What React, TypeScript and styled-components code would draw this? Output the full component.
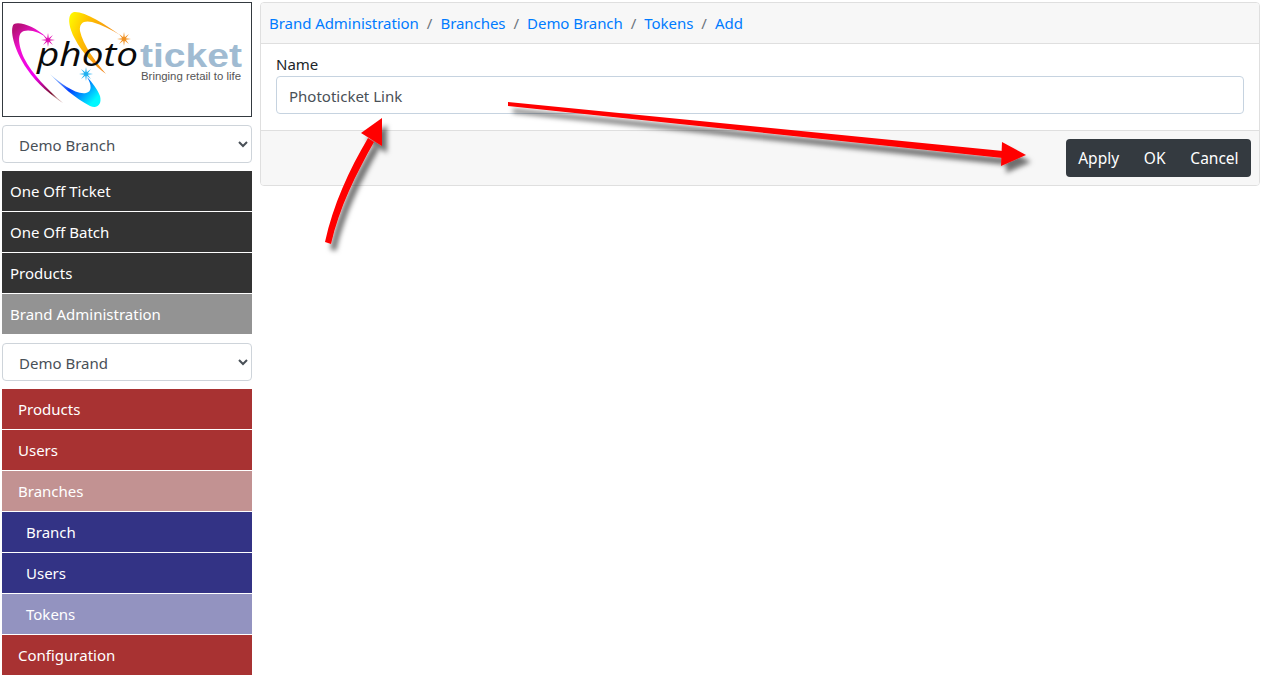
import React from "react";
import styled, { createGlobalStyle } from "styled-components";

const GlobalStyle = createGlobalStyle`
  html, body {
    margin: 0;
    padding: 0;
    background: #fff;
    font-family: "Noto Sans", "Liberation Sans", sans-serif;
    font-size: 15px;
    color: #212529;
  }
`;

const Page = styled.div`
  position: relative;
  display: flex;
  gap: 8px;
  padding: 2px;
  width: 1262px;
  height: 676px;
  box-sizing: border-box;
  overflow: hidden;
`;

const Sidebar = styled.div`
  display: flex;
  flex-direction: column;
  width: 250px;
  flex-shrink: 0;
`;

const LogoBox = styled.div`
  height: 115px;
  flex-shrink: 0;
  box-sizing: border-box;
  border: 1px solid #343a40;
  margin-bottom: 8px;
`;

const BranchSelect = styled.select<{ spaced?: boolean }>`
  display: block;
  flex-shrink: 0;
  width: 100%;
  height: 38px;
  padding: 7px 12px 5px;
  margin-top: ${(props) => (props.spaced ? 8 : 0)}px;
  margin-bottom: 8px;
  box-sizing: border-box;
  border: 1px solid #ced4da;
  border-radius: 4px;
  background-color: #fff;
  color: #495057;
  font-family: inherit;
  font-size: 15px;
`;

const MenuItem = styled.div<{ bg: string; indent: number }>`
  height: 40px;
  flex-shrink: 0;
  margin-bottom: 1px;
  padding-left: ${(props) => props.indent}px;
  display: flex;
  align-items: center;
  background: ${(props) => props.bg};
  color: #fff;
  font-size: 15px;
  box-sizing: border-box;
`;

const Card = styled.div`
  flex: 1;
  align-self: flex-start;
  border: 1px solid #dfdfdf;
  border-radius: 4px;
  overflow: hidden;
`;

const CardHeader = styled.div`
  height: 41px;
  box-sizing: border-box;
  padding: 0 8px;
  background: #f7f7f7;
  border-bottom: 1px solid #dfdfdf;
  display: flex;
  align-items: center;
`;

const Crumb = styled.a`
  color: #007bff;
  font-size: 15px;
  letter-spacing: -0.05px;
  text-decoration: none;
`;

const CrumbSep = styled.span`
  color: #6c757d;
  padding: 0 8px;
  font-size: 15px;
`;

const CardBody = styled.div`
  height: 86px;
  box-sizing: border-box;
  padding: 9px 15px 0;
`;

const Label = styled.label`
  display: block;
  font-size: 15px;
  line-height: 22px;
  margin-bottom: 1px;
`;

const TextInput = styled.input`
  display: block;
  width: 100%;
  height: 38px;
  box-sizing: border-box;
  padding: 7px 12px 5px;
  border: 1px solid #c6d3e0;
  border-radius: 4px;
  color: #495057;
  font-family: inherit;
  font-size: 15px;
  outline: none;
`;

const CardFooter = styled.div`
  height: 55px;
  box-sizing: border-box;
  padding: 8px;
  background: #f7f7f7;
  border-top: 1px solid #dfdfdf;
  display: flex;
  justify-content: flex-end;
`;

const ButtonGroup = styled.div`
  display: flex;
  height: 38px;
  background: #343a40;
  border-radius: 4px;
  overflow: hidden;
`;

const GroupButton = styled.button`
  border: 0;
  background: transparent;
  color: #fff;
  font-family: inherit;
  font-size: 15.5px;
  padding: 0 12.4px;
`;

const ArrowLayer = styled.svg`
  position: absolute;
  left: 0;
  top: 0;
  pointer-events: none;
`;

const LogoSvg = styled.svg`
  display: block;
`;

const Star = ({ x, y, color }: { x: number; y: number; color: string }) => {
  const pts: string[] = [];
  for (let i = 0; i < 16; i++) {
    const r = i % 2 === 0 ? 7 : 2;
    const a = (i * Math.PI) / 8;
    pts.push(`${(x + r * Math.cos(a)).toFixed(1)},${(y + r * Math.sin(a)).toFixed(1)}`);
  }
  return <polygon points={pts.join(" ")} fill={color} />;
};

const Logo = () => (
  <LogoSvg width="248" height="113" viewBox="3 3 248 113">
    <defs>
      <linearGradient id="mag" x1="0.2" y1="0" x2="0.8" y2="1">
        <stop offset="0" stopColor="#b8107a" />
        <stop offset="0.2" stopColor="#f010d0" />
        <stop offset="0.6" stopColor="#f000f0" />
        <stop offset="0.9" stopColor="#7a1030" />
        <stop offset="1" stopColor="#c8a0a0" />
      </linearGradient>
      <linearGradient id="yel" x1="0" y1="0" x2="1" y2="0.5">
        <stop offset="0" stopColor="#ffff00" />
        <stop offset="0.35" stopColor="#ffc000" />
        <stop offset="1" stopColor="#f08020" />
      </linearGradient>
      <linearGradient id="blu" x1="0" y1="0" x2="1" y2="0.6">
        <stop offset="0" stopColor="#c0e0ff" />
        <stop offset="0.5" stopColor="#0040ff" />
        <stop offset="1" stopColor="#00f8ff" />
      </linearGradient>
    </defs>
    <path d="M46 37 C36 27 20 21 14 24 C9 29 14 50 27 69 C37 84 52 96 63 103 C48 90 32 74 24 58 C18 44 17 33 24 31 C31 29 40 33 46 37 Z" fill="url(#mag)" />
    <path d="M120 35 C105 24 84 11 74 12 C67 14 68 26 75 39 C82 53 95 66 106 74 C95 61 83 45 80 31 C79 23 84 20 92 22 C102 25 112 30 120 35 Z" fill="url(#yel)" />
    <path d="M50 74 C60 85 75 98 90 106 C98 109 102 104 100 96 C98 90 92 82 87 77 C92 85 92 92 86 93 C76 95 60 83 50 74 Z" fill="url(#blu)" />
    <Star x={48} y={40} color="#e010b0" />
    <Star x={124} y={39} color="#f09020" />
    <Star x={86} y={74} color="#20b0f0" />
    <text x="37" y="66" fontFamily="Open Sans" fontStyle="italic" fontWeight="400" fontSize="32" fill="#0a0a0a" textLength="101" lengthAdjust="spacingAndGlyphs">photo</text>
    <text x="140" y="67" fontFamily="Liberation Sans" fontWeight="bold" fontSize="33" fill="#a0bbd2" textLength="102" lengthAdjust="spacingAndGlyphs">ticket</text>
    <text x="141" y="79.5" fontFamily="Liberation Sans" fontSize="10" fill="#555" textLength="100" lengthAdjust="spacingAndGlyphs">Bringing retail to life</text>
  </LogoSvg>
);

const Arrows = () => (
  <ArrowLayer width="1262" height="676" viewBox="0 0 1262 676">
    <defs>
      <filter id="shadow" x="-20%" y="-20%" width="140%" height="140%">
        <feDropShadow dx="5" dy="7" stdDeviation="2.5" floodColor="#000" floodOpacity="0.55" />
      </filter>
    </defs>
    <g filter="url(#shadow)" fill="#ff0000">
      <path d="M325 242 C333 205 349 170 368 138 L374 142 C356 174 339 208 331 244 Z" />
      <polygon points="382,118 361,133 382,146" />
      <polygon points="508,102 1003,151 1003,158 508,106" />
      <polygon points="1026,155 1002,142 1001,166" />
    </g>
  </ArrowLayer>
);

const dark = "#333333";
const red = "#a83232";
const navy = "#333385";

const topItems = [
  { label: "One Off Ticket", bg: dark },
  { label: "One Off Batch", bg: dark },
  { label: "Products", bg: dark },
  { label: "Brand Administration", bg: "#939393" },
];

const brandItems = [
  { label: "Products", bg: red, indent: 16 },
  { label: "Users", bg: red, indent: 16 },
  { label: "Branches", bg: "#c29292", indent: 16 },
  { label: "Branch", bg: navy, indent: 24 },
  { label: "Users", bg: navy, indent: 24 },
  { label: "Tokens", bg: "#9393c0", indent: 24 },
  { label: "Configuration", bg: red, indent: 16 },
];

const crumbs = ["Brand Administration", "Branches", "Demo Branch", "Tokens", "Add"];

export default function App() {
  return (
    <Page>
      <GlobalStyle />
      <Sidebar>
        <LogoBox>
          <Logo />
        </LogoBox>
        <BranchSelect defaultValue="Demo Branch">
          <option>Demo Branch</option>
        </BranchSelect>
        {topItems.map((item) => (
          <MenuItem key={item.label} bg={item.bg} indent={8}>
            {item.label}
          </MenuItem>
        ))}
        <BranchSelect spaced defaultValue="Demo Brand">
          <option>Demo Brand</option>
        </BranchSelect>
        {brandItems.map((item, i) => (
          <MenuItem key={i} bg={item.bg} indent={item.indent}>
            {item.label}
          </MenuItem>
        ))}
      </Sidebar>
      <Card>
        <CardHeader>
          {crumbs.map((c, i) => (
            <React.Fragment key={c}>
              {i > 0 && <CrumbSep>/</CrumbSep>}
              <Crumb href="#">{c}</Crumb>
            </React.Fragment>
          ))}
        </CardHeader>
        <CardBody>
          <Label>Name</Label>
          <TextInput defaultValue="Phototicket Link" />
        </CardBody>
        <CardFooter>
          <ButtonGroup>
            <GroupButton>Apply</GroupButton>
            <GroupButton>OK</GroupButton>
            <GroupButton>Cancel</GroupButton>
          </ButtonGroup>
        </CardFooter>
      </Card>
      <Arrows />
    </Page>
  );
}
